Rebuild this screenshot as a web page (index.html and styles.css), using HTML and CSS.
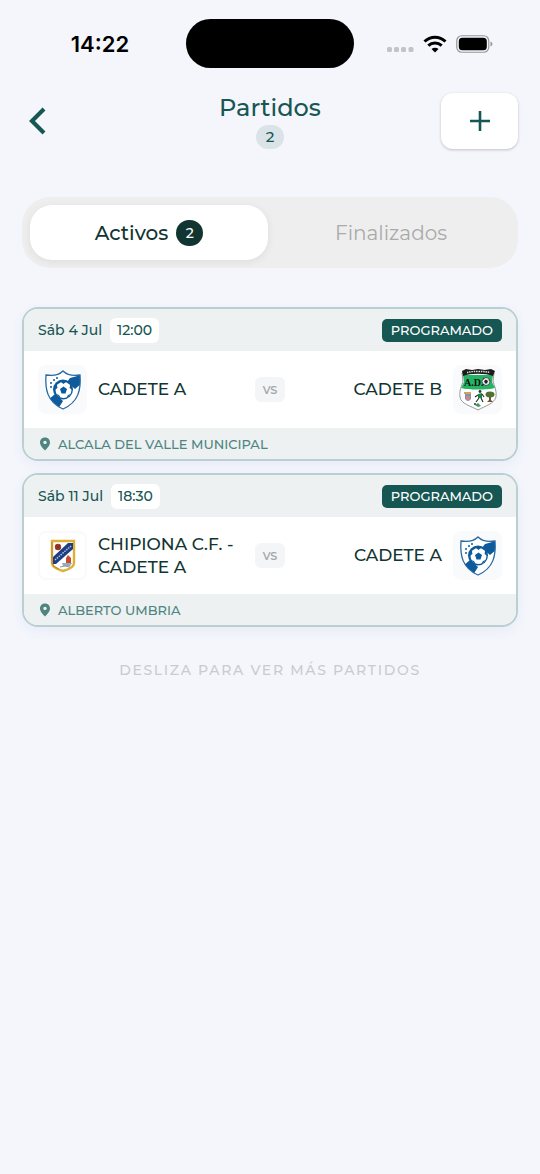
FILE: index.html
```html
<!DOCTYPE html>
<html lang="es">
<head>
<meta charset="utf-8">
<meta name="viewport" content="width=device-width, initial-scale=1">
<title>Partidos</title>
<link rel="stylesheet" href="styles.css">
</head>
<body>
<svg class="defs" width="0" height="0" aria-hidden="true">
  <defs>
    <symbol id="crest-blue" viewBox="0 0 40 42">
      <clipPath id="blue-clip"><path d="M20 2C16 6 9 7 3 6C2 20 4 33 20 40C36 33 38 20 37 6C31 7 24 6 20 2Z"/></clipPath>
      <path d="M20 2C16 6 9 7 3 6C2 20 4 33 20 40C36 33 38 20 37 6C31 7 24 6 20 2Z" fill="#fff"/>
      <g clip-path="url(#blue-clip)" fill="#0d5b9c">
        <path d="M24 13L27 9L38 6V15L32 20Z"/>
        <path d="M5 31L12 25L20 32L15 40H8Z"/>
        <circle cx="20" cy="20.500" r="10"/>
        <circle cx="11" cy="11" r="1"/><circle cx="14" cy="9" r="1"/><circle cx="8" cy="14" r="1"/><circle cx="8" cy="18" r="1"/>
      </g>
      <circle cx="20.500" cy="21" r="8" fill="#fff"/>
      <path d="M20.500 17.500L24 20L22.500 24.500H18.500L17 20Z" fill="#0d5b9c"/>
      <path d="M17.500 12.500H23.500L20.500 15ZM27.500 15L29.500 21L26.500 19ZM13.500 15L11.500 21L14.500 19ZM13 25L18 29.500L16 26ZM28 25L23 29.500L25 26Z" fill="#0d5b9c"/>
      <path d="M20 2C16 6 9 7 3 6C2 20 4 33 20 40C36 33 38 20 37 6C31 7 24 6 20 2Z" fill="none" stroke="#2868a4" stroke-width="1.300"/>
    </symbol>
    <symbol id="pin" viewBox="0 0 12 14">
      <path fill-rule="evenodd" d="M6 0.500C2.800 0.500 1 2.800 1 5.400C1 8.500 4.300 11.500 6 13.500C7.700 11.500 11 8.500 11 5.400C11 2.800 9.200 0.500 6 0.500ZM6 3.700A1.700 1.700 0 1 1 6 7.100A1.700 1.700 0 1 1 6 3.700Z"/>
    </symbol>
  </defs>
</svg>

<div class="status">
  <time class="status-time">14:22</time>
  <div class="island"></div>
  <div class="status-icons">
    <svg width="27" height="6" viewBox="0 0 27 6" fill="#c2c3c8" aria-hidden="true"><rect width="5" height="5" rx="1.500"/><rect x="7" width="5" height="5" rx="1.500"/><rect x="14" width="5" height="5" rx="1.500"/><rect x="21.500" width="5" height="5" rx="1.500"/></svg>
    <svg class="wifi" width="24" height="18" viewBox="0 0 24 18" aria-hidden="true">
      <path d="M1.500 6.500C7.500 0.700 16.500 0.700 22.500 6.500" fill="none" stroke="#000" stroke-width="3"/>
      <path d="M5.300 10.700C9.200 7.100 14.800 7.100 18.700 10.700" fill="none" stroke="#000" stroke-width="3"/>
      <path d="M8.500 14C10.500 12.200 13.500 12.200 15.500 14L12 17.500Z"/>
    </svg>
    <svg width="37" height="18" viewBox="0 0 37 18" aria-hidden="true">
      <rect x="0.750" y="0.750" width="32" height="16.500" rx="5" fill="none" stroke="#96979b" stroke-width="1.200"/>
      <rect x="2.800" y="2.800" width="28" height="12.400" rx="3.500"/>
      <path d="M34.500 6.500C37 7.500 37 10.500 34.500 11.500Z" fill="#96979b"/>
    </svg>
  </div>
</div>

<header class="header">
  <button class="back" type="button" aria-label="Volver">
    <svg width="20" height="28" viewBox="0 0 20 28" fill="none" stroke="#165653" stroke-width="4.200" aria-hidden="true"><path d="M16 2L4 14L16 26"/></svg>
  </button>
  <div class="heading">
    <h1 class="title">Partidos</h1>
    <span class="count">2</span>
  </div>
  <button class="add" type="button" aria-label="Añadir partido">
    <svg width="20" height="20" viewBox="0 0 20 20" stroke="#165653" stroke-width="2.600" aria-hidden="true"><path d="M10 0V20M0 10H20"/></svg>
  </button>
</header>

<main class="main">
  <div class="tabs" role="tablist">
    <button class="tab tab-active" type="button" role="tab" aria-selected="true">Activos <span class="tab-count">2</span></button>
    <button class="tab" type="button" role="tab" aria-selected="false">Finalizados</button>
  </div>

  <div class="matches">
    <article class="card">
      <div class="card-top">
        <span class="date">Sáb 4 Jul</span><time class="hour">12:00</time>
        <span class="state">PROGRAMADO</span>
      </div>
      <div class="teams">
        <div class="team">
          <div class="crest"><svg width="40" height="42" aria-hidden="true"><use href="#crest-blue"/></svg></div>
          <span class="name">CADETE A</span>
        </div>
        <span class="versus">vs</span>
        <div class="team team-away">
          <span class="name">CADETE B</span>
          <div class="crest">
            <svg width="40" height="44" viewBox="0 0 40 44" aria-hidden="true">
              <path d="M4 5L20 2L36 5L35 13C36 18 39 22 38 29C36 36 27 38 20 42C13 38 3 36 2 29C1 22 4 18 5 13Z" fill="#fff" stroke="#999" stroke-width="1"/>
              <path d="M5 7H35L34 14L37 20C30 22 10 22 3 20L6 14Z" fill="#23b464"/>
              <path d="M4 3L8 1L14 2L20 1L27 2L33 1L37 3L35 8C27 5 13 5 5 8Z" fill="#1c1c1c"/>
              <path d="M9 4.500C16 3 25 3 32 4.500" fill="none" stroke="#ddd" stroke-width="1.500" stroke-dasharray="1.500 0.800"/>
              <text x="6" y="18" class="crest-initials">A.D.</text>
              <circle cx="28" cy="13.500" r="4" fill="#eee" stroke="#222" stroke-width="0.700"/>
              <path d="M28 11.500L30 13L29 15.500H27L26 13ZM25 10.500L27 10L25 12ZM31 11L32 14L30.500 12ZM25 15.500L27 17L24.500 16.500Z" fill="#222"/>
              <path d="M6 24H13V26H6Z" fill="#dda04c"/><path d="M7 26H13V31Q10 35 7 31Z" fill="#7893c4"/><path d="M8 28H12V32H8Z" fill="#c98a80"/>
              <path d="M31 27V32L29 34H35L33 32V27Z" fill="#765131"/><ellipse cx="32" cy="26.500" rx="4.500" ry="3" fill="#4d7232"/>
              <circle cx="22" cy="23.500" r="1.400" fill="#3a332c"/><path d="M20 26L24 25L24 30H20Z" fill="#158947"/>
              <path d="M20 27L17 29M24 26L26 29M21 30L18 34M23 30L25 34" fill="none" stroke="#26362b" stroke-width="1.200"/>
              <path d="M17 37L20 35L23 38L20 39Z" fill="#42975c"/><circle cx="17" cy="36" r="1" fill="#333"/>
            </svg>
          </div>
        </div>
      </div>
      <div class="place"><svg class="pin" width="12" height="14" aria-hidden="true"><use href="#pin"/></svg>ALCALA DEL VALLE MUNICIPAL</div>
    </article>

    <article class="card">
      <div class="card-top">
        <span class="date">Sáb 11 Jul</span><time class="hour">18:30</time>
        <span class="state">PROGRAMADO</span>
      </div>
      <div class="teams">
        <div class="team">
          <div class="crest crest-light">
            <svg width="26" height="34" viewBox="0 0 26 34" aria-hidden="true">
              <path d="M2 2H24V24Q24 29 13 32Q2 29 2 24Z" fill="#fff" stroke="#dfae36" stroke-width="2.400"/>
              <path d="M2 3V24Q3 28 9 30" fill="none" stroke="#b5852a" stroke-width="1"/>
              <path d="M18 4H23V10L6 25H3V18Z" fill="#1d3e84"/>
              <path d="M5 21L21 7" stroke="#b6c0d8" stroke-width="1.500" stroke-dasharray="1.500 1"/>
              <circle cx="8" cy="8" r="3.200" fill="#9e3828"/><path d="M6 6L10 10M10 6L6 10" stroke="#5f2820" stroke-width="0.600"/>
              <path d="M16 25V19L18 16L21 19V25Z" fill="#c74b30"/>
              <path d="M12 24H22L20 27H13Z" fill="#9aaab6"/><path d="M10 28Q15 26 20 28" fill="none" stroke="#789bb0" stroke-width="1"/>
            </svg>
          </div>
          <span class="name">CHIPIONA C.F. - CADETE A</span>
        </div>
        <span class="versus">vs</span>
        <div class="team team-away">
          <span class="name">CADETE A</span>
          <div class="crest"><svg width="40" height="42" aria-hidden="true"><use href="#crest-blue"/></svg></div>
        </div>
      </div>
      <div class="place"><svg class="pin" width="12" height="14" aria-hidden="true"><use href="#pin"/></svg>ALBERTO UMBRIA</div>
    </article>
  </div>
  <p class="hint">DESLIZA PARA VER MÁS PARTIDOS</p>
</main>
</body>
</html>
```
FILE: styles.css
```css
* { box-sizing: border-box; }

body {
  margin: 0;
  min-height: 100vh;
  background: #f4f6fc;
  color: #123532;
  font-family: Montserrat, Inter, "Liberation Sans", sans-serif;
  font-weight: 500;
}

button {
  border: 0;
  padding: 0;
  background: none;
  color: inherit;
  font: inherit;
  cursor: pointer;
}

svg { display: block; flex: none; }
.defs { position: absolute; }

.status {
  display: grid;
  grid-template-columns: 1fr auto 1fr;
  align-items: center;
  padding-top: 19px;
}

.status-time {
  padding-left: 14px;
  text-align: center;
  color: #000;
  font: 600 22px/28px Inter, sans-serif;
}

.island {
  width: 168px;
  height: 49px;
  border-radius: 25px;
  background: #000;
}

.status-icons {
  display: flex;
  align-items: center;
  justify-content: flex-end;
  padding-right: 47px;
}

.status-icons svg:first-child { margin-top: 12px; }
.wifi { margin: 0 9px; }

.header {
  display: grid;
  grid-template-columns: 80px 1fr 80px;
  align-items: center;
  padding: 25px 22px 0;
}

.back {
  width: 36px;
  padding: 8px 6px;
}

.heading {
  display: flex;
  flex-direction: column;
  align-items: center;
  gap: 2px;
}

.title {
  margin: 0;
  color: #165653;
  font-size: 24px;
  font-weight: 500;
  line-height: 30px;
}

.count {
  padding: 0 10px;
  border-radius: 12px;
  background: #dae3e8;
  color: #165653;
  font-size: 15px;
  line-height: 24px;
}

.add {
  display: grid;
  place-items: center;
  justify-self: end;
  width: 77px;
  height: 56px;
  border-radius: 12px;
  background: #fff;
  box-shadow: 0 1px 3px rgba(0, 0, 0, 0.22);
}

.main { padding: 48px 22px 0; }

.tabs {
  display: grid;
  grid-template-columns: 1fr 1fr;
  gap: 4px;
  padding: 8px;
  border-radius: 28px;
  background: #eee;
}

.tab {
  display: flex;
  align-items: center;
  justify-content: center;
  gap: 8px;
  height: 55px;
  border-radius: 22px;
  color: #aaa;
  font-size: 20px;
  font-weight: 400;
}

.tab-active {
  background: #fff;
  color: #123532;
  font-weight: 500;
  box-shadow: 0 2px 8px rgba(0, 0, 0, 0.07);
}

.tab-count {
  width: 27px;
  border-radius: 13px;
  background: #123532;
  color: #fff;
  font-size: 14px;
  line-height: 26px;
}

.matches {
  display: grid;
  gap: 12px;
  margin-top: 39px;
}

.card {
  overflow: hidden;
  border: 2px solid #b9cfd1;
  border-radius: 16px;
  background: #fff;
  box-shadow: 0 4px 12px rgba(60, 90, 190, 0.06);
}

.card-top {
  display: flex;
  align-items: center;
  height: 42px;
  padding: 0 14px;
  background: #edf1f2;
  color: #165653;
  font-size: 14px;
}

.hour {
  margin-left: 8px;
  padding: 0 7px;
  border-radius: 6px;
  background: #fff;
  line-height: 25px;
}

.state {
  margin-left: auto;
  padding: 0 9px;
  border-radius: 5px;
  background: #165653;
  color: #fff;
  font-size: 13px;
  line-height: 23px;
}

.teams {
  display: grid;
  grid-template-columns: 1fr auto 1fr;
  align-items: center;
  gap: 16px;
  min-height: 77px;
  padding: 0 14px;
}

.team {
  display: flex;
  align-items: center;
  gap: 11px;
}

.team-away {
  justify-content: flex-end;
  text-align: right;
}

.name {
  font-size: 17px;
  line-height: 23px;
}

.crest {
  display: grid;
  flex: none;
  place-items: center;
  width: 49px;
  height: 49px;
  border-radius: 8px;
  background: #f9fafc;
}

.crest-light {
  border: 2px solid #f9fafc;
  background: #fff;
}

.crest-initials {
  font: 700 10px "Liberation Serif", serif;
  fill: #111;
}

.versus {
  padding: 0 8px;
  border-radius: 6px;
  background: #f4f5f7;
  color: #a5a6a9;
  font-size: 14px;
  line-height: 25px;
}

.place {
  display: flex;
  align-items: center;
  gap: 7px;
  height: 31px;
  padding: 0 15px;
  background: #edf1f2;
  color: #4f8581;
  font-size: 13px;
}

.pin { fill: #4f8581; }

.hint {
  margin: 32px 0 0;
  text-align: center;
  color: #c9cbd0;
  font-size: 14px;
  letter-spacing: 0.12em;
  line-height: 22px;
}
```
